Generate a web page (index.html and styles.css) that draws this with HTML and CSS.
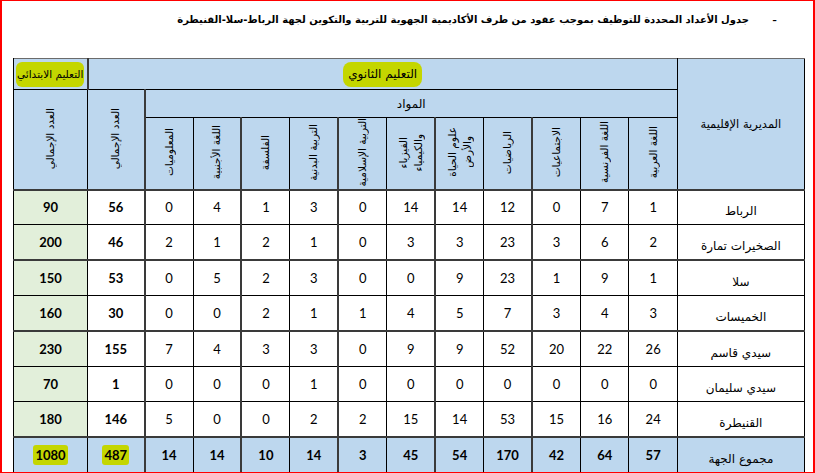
FILE: index.html
```html
<!DOCTYPE html>
<html lang="ar">
<head>
<meta charset="utf-8">
<title>جدول الأعداد المحددة للتوظيف</title>
<link rel="stylesheet" href="styles.css">
</head>
<body>
<div class="page">
  <div class="title" dir="rtl">
    <span class="dash">-</span>
    <span class="title-text">جدول الأعداد المحددة للتوظيف بموجب عقود من طرف الأكاديمية الجهوية للتربية والتكوين لجهة الرباط-سلا-القنيطرة</span>
  </div>
  <div class="table-wrap">
    <table class="grid" dir="rtl">
      <colgroup>
        <col class="c-name">
        <col class="c-sub"><col class="c-sub"><col class="c-sub"><col class="c-sub"><col class="c-sub"><col class="c-sub"><col class="c-sub"><col class="c-sub"><col class="c-sub"><col class="c-sub"><col class="c-sub">
        <col class="c-sec">
        <col class="c-prim">
      </colgroup>
      <thead>
        <tr class="h1">
          <th rowspan="3" class="hd name-head">المديرية الإقليمية</th>
          <th colspan="12" class="hd tk-l"><span class="hl hl-sec">التعليم الثانوي</span></th>
          <th class="hd prim-head"><span class="hl hl-prim">التعليم الابتدائي</span></th>
        </tr>
        <tr class="h2">
          <th colspan="11" class="hd mawad tk-l">المواد</th>
          <th rowspan="2" class="hd"><div class="vt">العدد الإجمالي</div></th>
          <th rowspan="2" class="hd"><div class="vt">العدد الإجمالي</div></th>
        </tr>
        <tr class="h3">
          <th class="hd"><div class="vt">اللغة العربية</div></th>
          <th class="hd"><div class="vt">اللغة الفرنسية</div></th>
          <th class="hd tk-l"><div class="vt">الاجتماعيات</div></th>
          <th class="hd"><div class="vt">الرياضيات</div></th>
          <th class="hd tk-l"><div class="vt">علوم الحياة<br>والأرض</div></th>
          <th class="hd"><div class="vt">الفيزياء<br>والكيمياء</div></th>
          <th class="hd tk-l"><div class="vt">التربية الإسلامية</div></th>
          <th class="hd"><div class="vt">التربية البدنية</div></th>
          <th class="hd tk-l"><div class="vt">الفلسفة</div></th>
          <th class="hd"><div class="vt">اللغة الأجنبية</div></th>
          <th class="hd tk-l"><div class="vt">المعلوميات</div></th>
        </tr>
      </thead>
      <tbody>
        <tr class="tk-t"><td class="nm">الرباط</td><td>1</td><td>7</td><td class="tk-l">0</td><td>12</td><td class="tk-l">14</td><td>14</td><td class="tk-l">0</td><td>3</td><td class="tk-l">1</td><td>4</td><td class="tk-l">0</td><td class="b">56</td><td class="b pr">90</td></tr>
        <tr><td class="nm">الصخيرات تمارة</td><td>2</td><td>6</td><td class="tk-l">3</td><td>23</td><td class="tk-l">3</td><td>3</td><td class="tk-l">0</td><td>1</td><td class="tk-l">2</td><td>1</td><td class="tk-l">2</td><td class="b">46</td><td class="b pr">200</td></tr>
        <tr class="tk-t"><td class="nm">سلا</td><td>1</td><td>9</td><td class="tk-l">1</td><td>23</td><td class="tk-l">9</td><td>0</td><td class="tk-l">0</td><td>3</td><td class="tk-l">2</td><td>5</td><td class="tk-l">0</td><td class="b">53</td><td class="b pr">150</td></tr>
        <tr><td class="nm">الخميسات</td><td>3</td><td>4</td><td class="tk-l">3</td><td>7</td><td class="tk-l">5</td><td>4</td><td class="tk-l">1</td><td>1</td><td class="tk-l">2</td><td>0</td><td class="tk-l">0</td><td class="b">30</td><td class="b pr">160</td></tr>
        <tr class="tk-t"><td class="nm">سيدي قاسم</td><td>26</td><td>22</td><td class="tk-l">20</td><td>52</td><td class="tk-l">9</td><td>9</td><td class="tk-l">0</td><td>3</td><td class="tk-l">3</td><td>4</td><td class="tk-l">7</td><td class="b">155</td><td class="b pr">230</td></tr>
        <tr><td class="nm">سيدي سليمان</td><td>0</td><td>0</td><td class="tk-l">0</td><td>0</td><td class="tk-l">0</td><td>0</td><td class="tk-l">0</td><td>1</td><td class="tk-l">0</td><td>0</td><td class="tk-l">0</td><td class="b">1</td><td class="b pr">70</td></tr>
        <tr><td class="nm">القنيطرة</td><td>24</td><td>16</td><td class="tk-l">15</td><td>53</td><td class="tk-l">14</td><td>15</td><td class="tk-l">2</td><td>2</td><td class="tk-l">0</td><td>0</td><td class="tk-l">5</td><td class="b">146</td><td class="b pr">180</td></tr>
        <tr class="tk-t total"><td class="nm">مجموع الجهة</td><td>57</td><td>64</td><td class="tk-l">42</td><td>170</td><td class="tk-l">54</td><td>45</td><td class="tk-l">3</td><td>14</td><td class="tk-l">10</td><td>14</td><td class="tk-l">14</td><td><span class="hl hl-num">487</span></td><td><span class="hl hl-num">1080</span></td></tr>
      </tbody>
    </table>
  </div>
</div>
</body>
</html>
```

FILE: styles.css
```css
* { box-sizing: border-box; }
html, body { margin: 0; padding: 0; background: #fff; }
body { font-family: "DejaVu Sans", sans-serif; color: #000; }

.page {
  width: 815px;
  height: 473px;
  border-left: 2px solid #ff0000;
  border-top: 1px solid #ff0000;
  border-right: 2px solid #ff0000;
  border-bottom: 1px solid #ff0000;
  overflow: hidden;
  background: #fff;
}

.title {
  height: 57px;
  display: flex;
  align-items: flex-start;
  padding-top: 10px;
  padding-right: 36px;
  font-family: "DejaVu Sans", sans-serif;
}
.dash { width: 28px; font-family: "Liberation Sans", sans-serif; font-size: 14px; line-height: 18px; }
.title-text { font-weight: bold; font-size: 10px; line-height: 18px; white-space: nowrap; }

.table-wrap { padding-left: 11px; }

.grid {
  width: 791px;
  table-layout: fixed;
  border-collapse: collapse;
  font-family: Lato, "Liberation Sans", sans-serif;
  font-size: 13px;
}
.c-name { width: 127px; }
.c-sub { width: 48.45px; }
.c-sec { width: 57px; }
.c-prim { width: 74px; }

.grid th, .grid td {
  border: 1px solid #000;
  padding: 0;
  text-align: center;
  vertical-align: middle;
}
.grid thead tr:first-child th { border-top-color: #6b6b6b; }
.grid .tk-l { border-left: 2px solid #3a3a3a; }
.grid tr.tk-t td { border-top: 2px solid #3a3a3a; }

.hd {
  background: #bdd7ee;
  font-weight: normal;
  font-family: "DejaVu Sans", sans-serif;
  font-size: 10.5px;
}
.h1 { height: 31px; }
.h2 { height: 28px; }
.h3 { height: 72px; }

.name-head { font-size: 11.5px; padding-bottom: 10px; }
.mawad { font-size: 12px; }

.prim-head { text-align: left; padding-left: 1px; }

.hl { background: #c4d600; border-radius: 4px; }
.hl-sec { display: inline-block; padding: 5px 5px 6px; font-size: 12px; border-radius: 8px; }
.hl-prim { display: inline-block; padding: 6px 1px 7px; font-size: 10.5px; white-space: nowrap; border-radius: 6px; }
.hl-num { display: inline-block; padding: 1px 2px; border-radius: 3px; line-height: 18px; }

.vt {
  display: inline-block;
  writing-mode: vertical-rl;
  transform: rotate(180deg);
  line-height: 15px;
  white-space: nowrap;
  text-align: center;
}

.grid tbody tr { height: 35.4px; }
.grid td { color: #000; padding-top: 0; }
.grid td.nm { font-family: "DejaVu Sans", sans-serif; font-size: 12px; padding-top: 8px; }
.grid td.b { font-weight: bold; }
.grid td.pr { background: #e2efda; }
.grid tr.total td { background: #bdd7ee; font-weight: bold; }
.grid tr.total td.nm { font-weight: normal; }
```
